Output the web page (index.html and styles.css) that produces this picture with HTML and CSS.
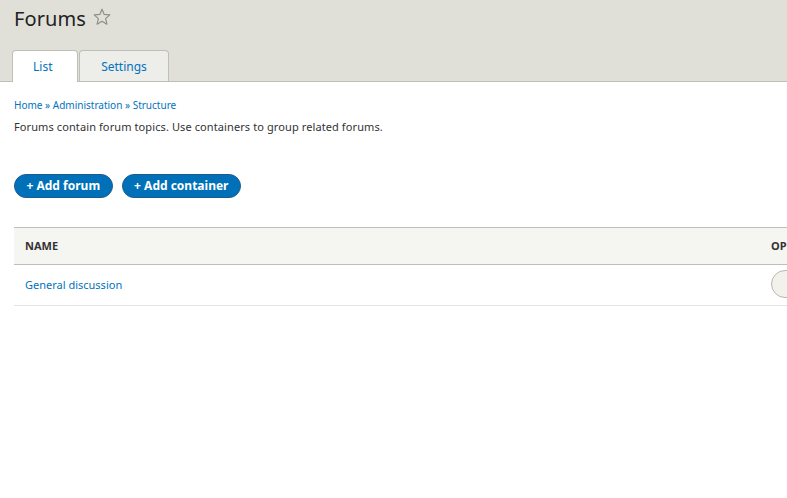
FILE: index.html
```html
<!DOCTYPE html>
<html lang="en">

<head>
    <meta charset="utf-8">
    <meta name="viewport" content="width=device-width, initial-scale=1.0">
    <title>Forums</title>
    <link rel="stylesheet" href="styles.css">
</head>

<body>
    <header class="page-header">
        <h1 class="page-title">Forums
            <span class="shortcut">
                <svg width="18" height="18" viewBox="0 0 18 18">
                    <polygon points="9,1.2 11.2,6.4 16.8,6.9 12.6,10.6 13.9,16.2 9,13.2 4.1,16.2 5.4,10.6 1.2,6.9 6.8,6.4"
                        fill="none" stroke="#8f8f8a" stroke-width="1.2" stroke-linejoin="round" />
                </svg>
            </span>
        </h1>
        <nav class="tabs">
            <a class="tab is-active" href="#">List</a>
            <a class="tab" href="#">Settings</a>
        </nav>
    </header>

    <main class="content">
        <div class="breadcrumb">
            <a href="#">Home</a> » <a href="#">Administration</a> » <a href="#">Structure</a>
        </div>
        <p class="help">Forums contain forum topics. Use containers to group related forums.</p>

        <div class="actions">
            <a class="button" href="#">+ Add forum</a>
            <a class="button" href="#">+ Add container</a>
        </div>

        <table class="forum-table">
            <thead>
                <tr>
                    <th class="col-name">Name</th>
                    <th class="col-ops">Operations</th>
                </tr>
            </thead>
            <tbody>
                <tr>
                    <td><a href="#">General discussion</a></td>
                    <td class="col-ops"><span class="dropbutton">Edit forum</span></td>
                </tr>
            </tbody>
        </table>
    </main>
</body>

</html>
```

FILE: styles.css
```css
html,
body {
    overflow: hidden;
}

body {
    margin: 0;
    background-color: #fff;
    color: #333;
    font-family: "Noto Sans", "Open Sans", sans-serif;
    font-size: 12px;
}

a {
    color: #0074bd;
    text-decoration: none;
}

/* header */

.page-header {
    background-color: #e0e0d8;
    padding: 4px 0 0 12px;
    border-bottom: 1px solid #bfbfba;
}

.page-title {
    margin: 0 0 0 2px;
    font-size: 20px;
    font-weight: normal;
    color: #222;
    display: flex;
    align-items: center;
    gap: 7px;
    height: 28px;
    letter-spacing: 0.1px;
}

.shortcut {
    display: flex;
    margin-top: -2px;
}

.tabs {
    display: flex;
    margin-top: 18px;
    margin-bottom: -1px;
}

.tab {
    display: block;
    height: 30px;
    line-height: 31px;
    padding: 0 20px;
    border: 1px solid #bfbfba;
    border-bottom: none;
    border-radius: 4px 4px 0 0;
    background-color: #ededea;
    margin-right: 1px;
    font-size: 12px;
}

.tab.is-active {
    background-color: #fff;
    height: 31px;
    width: 24px;
}

.tab:not(.is-active) {
    width: 48px;
    text-align: center;
}

/* content */

.content {
    padding: 15px 14px 0;
}

.breadcrumb {
    font-size: 10px;
    color: #0074bd;
    line-height: 16px;
}

.help {
    margin: 6px 0 0;
    font-size: 11px;
    line-height: 16px;
    letter-spacing: 0.1px;
}

.actions {
    display: flex;
    gap: 9px;
    margin-top: 39px;
}

.button {
    display: block;
    background-color: #0071b8;
    border: 1px solid #1e5c90;
    color: #fff;
    font-weight: bold;
    font-size: 12px;
    line-height: 22px;
    padding: 0 11.5px;
    border-radius: 20px;
}

.forum-table {
    margin-top: 29px;
    border-collapse: collapse;
    width: 900px;
}

.forum-table th {
    background-color: #f5f5f2;
    border-top: 1px solid #bfbfba;
    border-bottom: 1px solid #bfbfba;
    text-align: left;
    text-transform: uppercase;
    font-size: 11px;
    font-weight: bold;
    color: #333;
    height: 35px;
    padding: 0 11px 1px;
}

.forum-table td {
    border-bottom: 1px solid #e6e4df;
    height: 38px;
    padding: 0 11px 2px;
    font-size: 11px;
}

.forum-table .col-name {
    width: 724px;
}

.dropbutton {
    display: inline-block;
    border: 1px solid #b8b8b0;
    border-radius: 14px;
    background-color: #f2f1eb;
    height: 26px;
    line-height: 26px;
    padding: 0 14px 0 20px;
    color: #333;
}
```
